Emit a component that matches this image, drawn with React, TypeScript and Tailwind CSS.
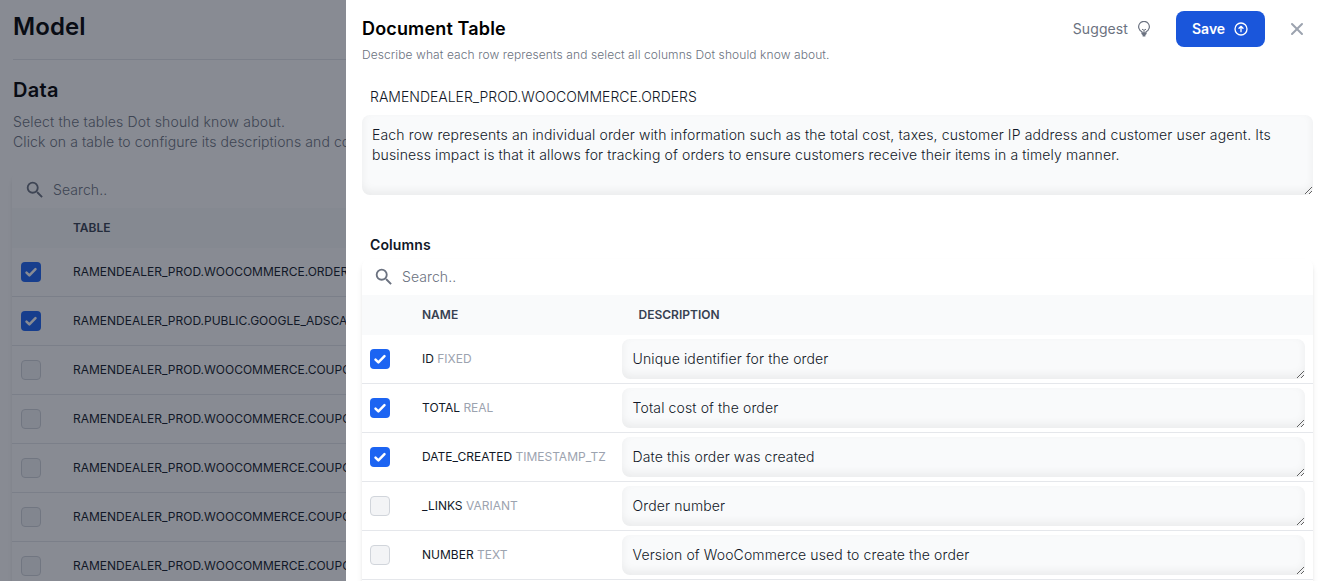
import { HiOutlineArrowCircleUp, HiX } from "react-icons/hi";
import { MdSearch } from "react-icons/md";

const columns = [
  { name: "ID", type: "FIXED", description: "Unique identifier for the order", checked: true },
  { name: "TOTAL", type: "REAL", description: "Total cost of the order", checked: true },
  { name: "DATE_CREATED", type: "TIMESTAMP_TZ", description: "Date this order was created", checked: true },
  { name: "_LINKS", type: "VARIANT", description: "Order number", checked: false },
  { name: "NUMBER", type: "TEXT", description: "Version of WooCommerce used to create the order", checked: false },
];

const tables = [
  { name: "RAMENDEALER_PROD.WOOCOMMERCE.ORDERS", checked: true },
  { name: "RAMENDEALER_PROD.PUBLIC.GOOGLE_ADSCAMPAIGNS", checked: true },
  { name: "RAMENDEALER_PROD.WOOCOMMERCE.COUPONS", checked: false },
  { name: "RAMENDEALER_PROD.WOOCOMMERCE.COUPONS_META", checked: false },
  { name: "RAMENDEALER_PROD.WOOCOMMERCE.COUPONS_LINKS", checked: false },
  { name: "RAMENDEALER_PROD.WOOCOMMERCE.COUPONS_USED", checked: false },
  { name: "RAMENDEALER_PROD.WOOCOMMERCE.COUPONS_TAX", checked: false },
];

function Check({ checked }: { checked: boolean }) {
  return checked ? (
    <span className="flex h-5 w-5 shrink-0 items-center justify-center rounded bg-[#1c64f2]">
      <svg viewBox="0 0 20 20" className="h-3.5 w-3.5" fill="none" stroke="#fff" strokeWidth="3.6" strokeLinecap="round" strokeLinejoin="round">
        <path d="M3.6 10.8 7.7 14.8 16.4 6" />
      </svg>
    </span>
  ) : (
    <span className="h-5 w-5 shrink-0 rounded border border-[#d1d5db] bg-[#f3f4f6]" />
  );
}

function Bulb() {
  return (
    <svg viewBox="0 0 14 16" className="h-4 w-3.5" fill="none" stroke="currentColor" strokeWidth="1.2" strokeLinejoin="round">
      <path d="M5 11.4V10.7A5.35 5.35 0 1 1 9 10.7v.7" />
      <path d="M5 8.2 7 9.3l2-1.1M7 9.3v2.5" strokeWidth="1" />
      <path d="M4.4 11.2h5.2v1.9l-1.2.9v1.4H5.6V14l-1.2-.9z" fill="currentColor" stroke="none" />
    </svg>
  );
}

function Search() {
  return (
    <>
      <MdSearch className="h-[22px] w-[22px] text-[#6b7280]" />
      <span className="text-sm font-light tracking-[0.08px] text-[#6b7280]">Search..</span>
    </>
  );
}

function BackgroundPage() {
  return (
    <main className="h-full w-[1300px] shrink-0 pl-3">
      <h1 className="ml-px pt-[11px] text-2xl leading-8 font-semibold tracking-[0.1px] text-black">Model</h1>
      <div className="ml-px mt-4 border-t border-[#e5e7eb]" />
      <h2 className="ml-px mt-4 text-xl leading-7 font-semibold tracking-[0.3px] text-black">Data</h2>
      <p className="ml-px mt-2 text-sm leading-5 font-light text-[#6b7280]">
        <span className="block tracking-[0.16px]">Select the tables Dot should know about.</span>
        <span className="block tracking-[0.09px]">Click on a table to configure its descriptions and columns.</span>
      </p>
      <section className="mt-5 rounded-lg shadow-md">
        <div className="flex h-9 items-center gap-[7px] pl-3">
          <Search />
        </div>
        <div className="flex h-10 items-center bg-[#f9fafb] pl-[61px] text-xs font-semibold text-[#374151]">TABLE</div>
        {tables.map((table) => (
          <div key={table.name} className="flex h-[49px] items-center border-b border-[#e5e7eb] pl-[9px] text-xs text-[#111827]">
            <Check checked={table.checked} />
            <span className="ml-8">{table.name}</span>
          </div>
        ))}
      </section>
    </main>
  );
}

const field =
  "block w-full resize overflow-hidden rounded-lg bg-[#f9fafb] py-2.5 text-sm leading-5 font-light text-[#111827] shadow-[inset_0_-4px_8px_rgba(0,0,0,0.06)] outline-none";

function Drawer() {
  return (
    <aside className="absolute inset-y-0 right-0 w-[976px] overflow-hidden bg-white pr-[9px] pl-4">
      <header className="flex items-start justify-between pt-[11px]">
        <div>
          <h2 className="mt-1 text-lg leading-7 font-semibold tracking-[0.15px] text-black">Document Table</h2>
          <p className="mt-1 text-xs leading-4 font-light tracking-[0.09px] text-[#6b7280]">
            Describe what each row represents and select all columns Dot should know about.
          </p>
        </div>
        <div className="flex items-center">
          <button className="flex items-center gap-[9px] text-sm tracking-[0.1px] text-[#6b7280]">
            Suggest <Bulb />
          </button>
          <button className="ml-[25px] flex h-9 w-[89px] items-center gap-2 rounded-lg bg-[#1a56db] pl-4 text-sm font-semibold text-white">
            Save
            <HiOutlineArrowCircleUp className="h-4 w-4" />
          </button>
          <button className="mr-1.5 ml-[22px]">
            <HiX className="h-5 w-5 text-[#9ca3af]" />
          </button>
        </div>
      </header>
      <div className="mt-6 ml-2 text-sm leading-5 font-light text-[#111827]">RAMENDEALER_PROD.WOOCOMMERCE.ORDERS</div>
      <div className="mt-2">
        <textarea
          className={`${field} h-20 px-2.5 tracking-[0.134px]`}
          defaultValue="Each row represents an individual order with information such as the total cost, taxes, customer IP address and customer user agent. Its business impact is that it allows for tracking of orders to ensure customers receive their items in a timely manner."
        />
      </div>
      <h3 className="mt-10 ml-2 text-sm leading-5 font-semibold tracking-[0.12px] text-[#111827]">Columns</h3>
      <section className="mt-1 rounded-t-lg pb-8 shadow-md">
        <div className="flex h-9 items-center gap-[7px] pl-[11px]">
          <Search />
        </div>
        <div className="flex h-10 items-center bg-[#f9fafb] pl-[60px] text-xs font-semibold text-[#374151]">
          <span className="w-[216.5px]">NAME</span>
          <span>DESCRIPTION</span>
        </div>
        {columns.map((column) => (
          <div key={column.name} className="flex h-[49px] items-center border-b border-[#e5e7eb] pr-2 pl-2 text-xs">
            <Check checked={column.checked} />
            <span className="ml-8 w-[200px] shrink-0 whitespace-nowrap text-[#111827]">
              {column.name} <span className="text-[#9ca3af]">{column.type}</span>
            </span>
            <textarea className={`${field} h-10 pr-2.5 pl-[10.6px] tracking-[0.12px]`} defaultValue={column.description} />
          </div>
        ))}
      </section>
    </aside>
  );
}

export default function App() {
  return (
    <div className="relative flex h-[581px] w-[1322px] overflow-hidden bg-white font-['Inter',sans-serif]">
      <BackgroundPage />
      <div className="absolute inset-0 bg-[#111827]/50" />
      <Drawer />
    </div>
  );
}
